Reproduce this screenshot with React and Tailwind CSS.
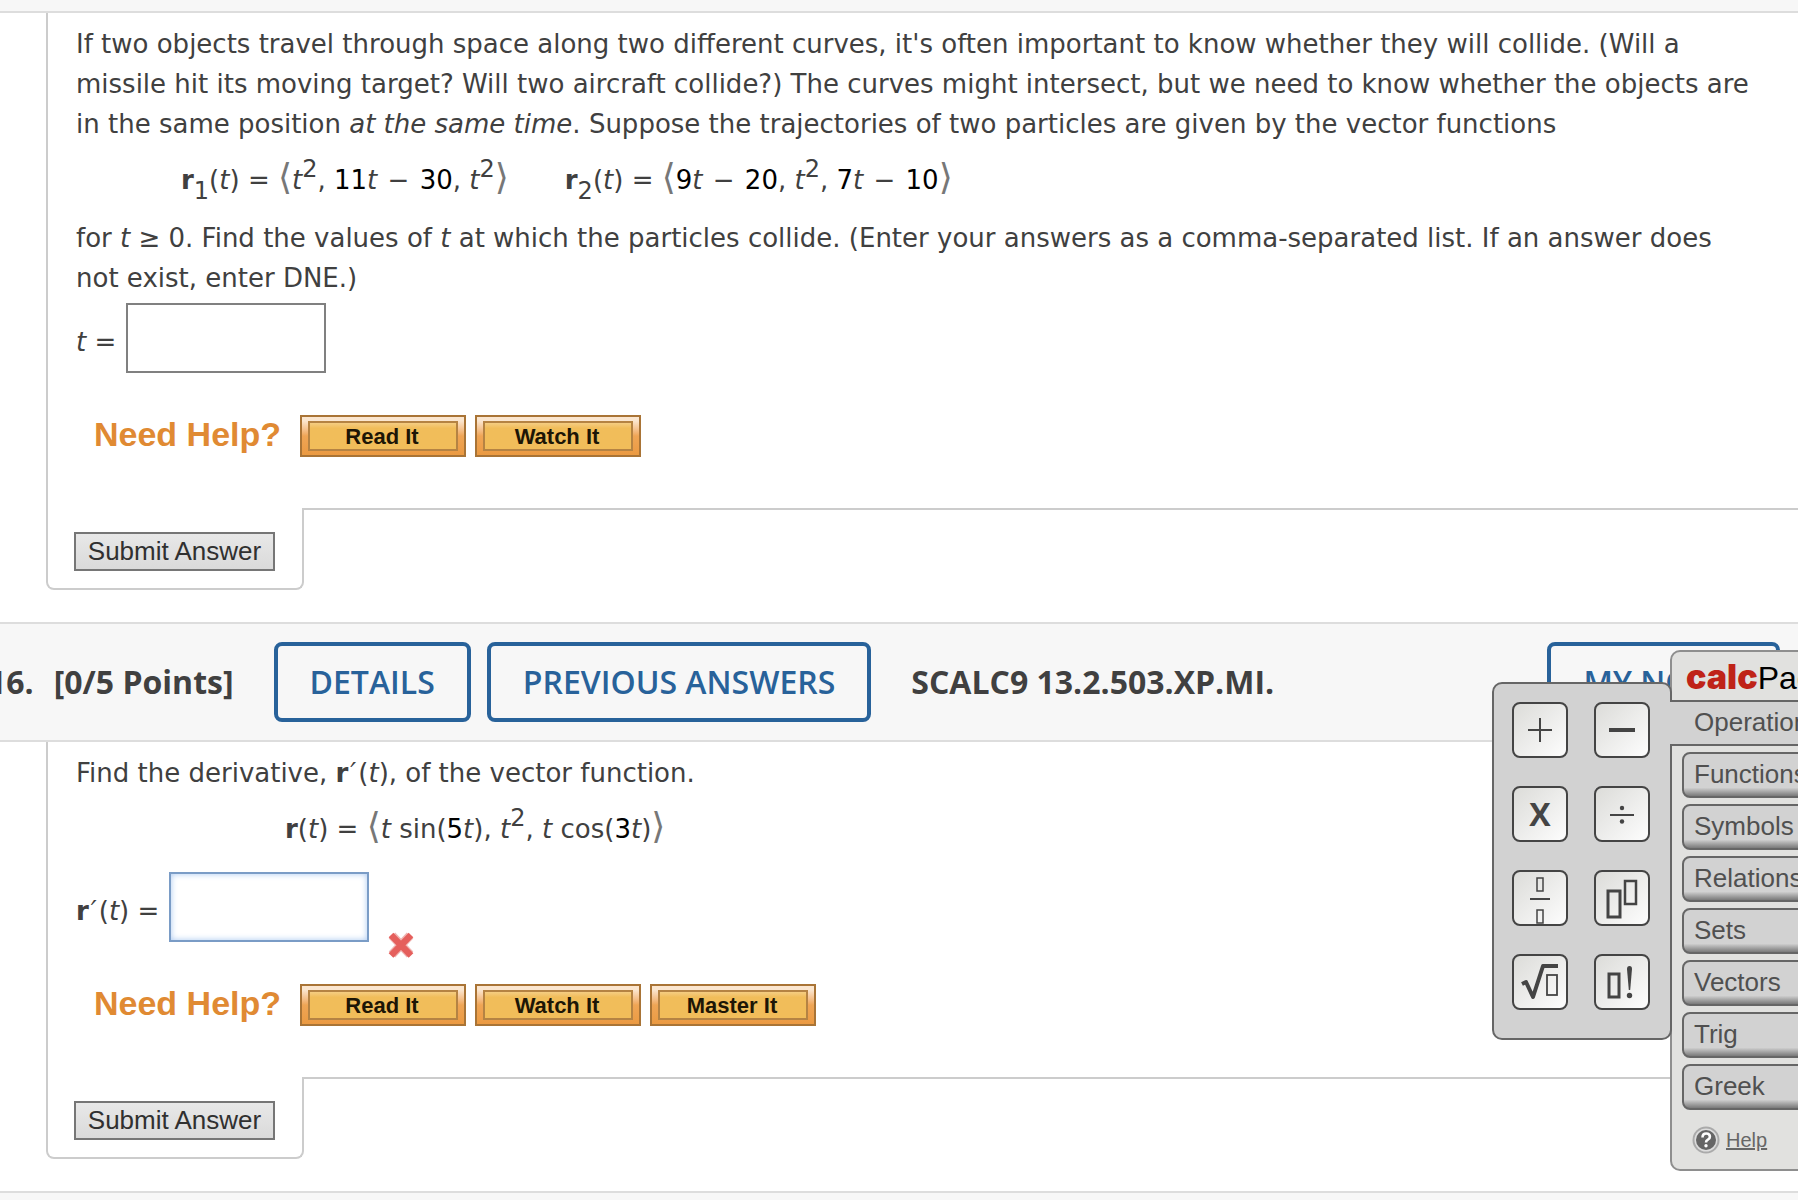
import { useState } from 'react';

const menuItems = ['Functions', 'Symbols', 'Relations', 'Sets', 'Vectors', 'Trig', 'Greek'];

// Drawings on the keypad buttons, all on a 52x52 grid
const keys = [
  {
    name: 'Plus',
    icon: <path d="M14 26h24M26 14v24" stroke="#444" strokeWidth="2" />,
  },
  {
    name: 'Minus',
    icon: <path d="M13 26h26" stroke="#444" strokeWidth="4" />,
  },
  {
    name: 'Times',
    icon: (
      <text
        x="26"
        y="38"
        textAnchor="middle"
        className="fill-[#444] font-['Open_Sans',sans-serif] text-[32px] font-bold"
      >
        X
      </text>
    ),
  },
  {
    name: 'Divide',
    icon: (
      <>
        <path d="M14 27h24" stroke="#444" strokeWidth="2" />
        <circle cx="26" cy="20" r="2.2" fill="#444" />
        <circle cx="26" cy="33.5" r="2.2" fill="#444" />
      </>
    ),
  },
  {
    name: 'Fraction',
    icon: (
      <g stroke="#444" fill="none">
        <rect x="23" y="6" width="6" height="13" strokeWidth="1.5" />
        <path d="M16 27h20" strokeWidth="2" />
        <rect x="23" y="38" width="6" height="13" strokeWidth="1.5" />
      </g>
    ),
  },
  {
    name: 'Exponent',
    icon: (
      <g stroke="#444" fill="none">
        <rect x="12" y="19" width="12" height="26" strokeWidth="3" />
        <rect x="29" y="9" width="11" height="23" strokeWidth="2.5" />
      </g>
    ),
  },
  {
    name: 'Square root',
    icon: (
      <g stroke="#444" fill="none">
        <path d="M8 28l4-2 7 15 10-31h15" strokeWidth="4" strokeLinejoin="round" />
        <rect x="33" y="19" width="10" height="20" strokeWidth="1.8" />
      </g>
    ),
  },
  {
    name: 'Factorial',
    icon: (
      <>
        <rect x="13" y="18" width="10" height="23" stroke="#444" strokeWidth="3" fill="none" />
        <path d="M31 13q0-3 2.500-3t2.500 3l-1.800 21h-1.400z" fill="#444" />
        <circle cx="33.500" cy="39.500" r="2.700" fill="#444" />
      </>
    ),
  },
];

const Num = ({ children }) => <span className="text-black">{children}</span>;

const Sup = ({ children }) => <sup className="-top-3 text-[24px]">{children}</sup>;

const Sub = ({ children }) => <sub className="-bottom-2.5 text-[24px]">{children}</sub>;

const Minus = () => <span className="px-0.5"> − </span>;

const Prime = () => <i className="px-0.5">′</i>;

// Tall angle brackets around a vector
const Vector = ({ children }) => (
  <>
    <span className="text-[36px] leading-none text-[#777]">⟨</span>
    {children}
    <span className="text-[36px] leading-none text-[#777]">⟩</span>
  </>
);

const HelpRow = ({ buttons }) => (
  <div className="mt-[42px] flex items-center gap-[9px] pl-[18px] font-['Liberation_Sans',sans-serif]">
    <span className="mr-[9px] w-[188px] pb-1 text-[34px] leading-9 font-bold text-[#e08a33]">
      Need Help?
    </span>
    {buttons.map((label) => (
      <button
        key={label}
        type="button"
        className="h-[42px] w-[166px] border-2 border-[#a97436] bg-linear-to-b from-[#fbe6cf] from-10% via-[#efa555] via-50% to-[#eb9a42] px-1.5 py-1"
      >
        <span className="flex h-full items-center justify-center border-2 border-[#b58343] bg-linear-to-b from-[#f5cd82] to-[#f1bd5a] to-20% pt-0.5 pr-0.5 text-[22px] leading-6 font-bold text-[#1d1606]">
          {label}
        </span>
      </button>
    ))}
  </div>
);

const Question = ({ children, help }) => (
  <section className="ml-[46px]">
    <div className="border-l-2 border-[#ccc] pt-[11px] pr-10 pb-[51px] pl-7">
      {children}
      <HelpRow buttons={help} />
    </div>

    {/* Submit tab hanging under the panel */}
    <div className="flex items-start">
      <div className="rounded-b-lg border-x-2 border-b-2 border-[#ccc] pt-6 pr-[27px] pb-[17px] pl-[26px]">
        <button
          type="submit"
          className="block h-[39px] w-[201px] border-2 border-[#767676] bg-linear-to-b from-[#e8e8e8] to-[#dadada] pb-0.5 font-['Liberation_Sans',sans-serif] text-[26px] leading-8 whitespace-nowrap text-[#303030]"
        >
          Submit Answer
        </button>
      </div>
      <div className="-ml-0.5 flex-1 border-t-2 border-[#ccc]" />
    </div>
  </section>
);

const headerButton =
  'h-20 shrink-0 rounded-lg border-4 border-[#28629a] text-[32px] font-semibold text-[#28629a]';

const CalcPad = () => (
  <aside className="absolute top-[650px] -right-[72px] flex items-start font-['Liberation_Sans',sans-serif] text-[26px] text-[#505050]">
    <div className="z-10 mt-8 grid grid-cols-2 gap-x-[26px] gap-y-7 rounded-[10px] border-2 border-[#666] bg-[#d2d2d2] pt-[18px] pr-5 pb-7 pl-[18px]">
      {keys.map(({ name, icon }) => (
        <button
          key={name}
          type="button"
          aria-label={name}
          className="size-14 rounded-lg border-2 border-[#444] bg-linear-to-br from-[#dcdcd9] to-[#fdfdfd]"
        >
          <svg viewBox="0 0 52 52" className="size-full">
            {icon}
          </svg>
        </button>
      ))}
    </div>

    <div className="-ml-0.5 w-[200px] rounded-[10px] border-2 border-[#8e8e8e] bg-[#e1e1df]">
      <h2 className="h-12 pl-3.5 text-[32px] leading-[50px] whitespace-nowrap text-black">
        <span className="font-['Inter',sans-serif] text-[34px] font-black text-[#bf2318]">
          calc
        </span>
        Pad
      </h2>
      <button
        type="button"
        className="relative z-20 -ml-0.5 block h-[46px] w-[200px] border-y-2 border-[#666] bg-[#d2d2d2] pb-0.5 pl-6 text-left"
      >
        Operations
      </button>
      <div className="flex flex-col gap-1.5 pt-1.5 pl-2.5">
        {menuItems.map((item) => (
          <button
            key={item}
            type="button"
            className="h-[46px] rounded-lg border-2 border-[#666] bg-linear-to-b from-[#d2d2d2] from-80% to-[#7a7a7a] pb-0.5 pl-2.5 text-left"
          >
            {item}
          </button>
        ))}
      </div>
      <a
        href="#help"
        className="mt-4 mb-[15px] flex items-center gap-1.5 pl-5 text-[20px] leading-7 text-[#666]"
      >
        <svg viewBox="0 0 28 28" className="size-7">
          <circle cx="14" cy="14" r="13.500" fill="#aaa" />
          <circle cx="14" cy="14" r="11.500" fill="#ddd" />
          <circle cx="14" cy="14" r="10" fill="#666" />
          <path
            d="M10.500 11.500q0-4 3.700-4t3.700 3.200q0 2-2 3t-1.900 2.800"
            fill="none"
            stroke="#fff"
            strokeWidth="2.600"
          />
          <circle cx="14" cy="19.800" r="1.700" fill="#fff" />
        </svg>
        <span className="underline">Help</span>
      </a>
    </div>
  </aside>
);

const App = () => {
  const [collide, setCollide] = useState('');
  const [derivative, setDerivative] = useState('');

  return (
    <main className="relative min-h-screen overflow-hidden bg-white font-['Verdana','DejaVu_Sans',sans-serif] text-[26px] leading-10 text-[#404040]">
      <div className="h-[13px] border-b-2 border-[#ddd] bg-[#f7f7f7]" />

      <Question help={['Read It', 'Watch It']}>
        <p>
          If two objects travel through space along two different curves, it's often important to
          know whether they will collide. (Will a missile hit its moving target? Will two aircraft
          collide?) The curves might intersect, but we need to know whether the objects are in the
          same position <em>at the same time</em>. Suppose the trajectories of two particles are
          given by the vector functions
        </p>
        <div className="flex h-[74px] items-center gap-14 pb-1 pl-[105px] whitespace-nowrap">
          <span>
            <b>r</b>
            <Sub>1</Sub>(<i>t</i>) ={' '}
            <Vector>
              <i>t</i>
              <Sup>2</Sup>, <Num>11</Num>
              <i>t</i>
              <Minus />
              <Num>30</Num>, <i>t</i>
              <Sup>2</Sup>
            </Vector>
          </span>
          <span>
            <b>r</b>
            <Sub>2</Sub>(<i>t</i>) ={' '}
            <Vector>
              <Num>9</Num>
              <i>t</i>
              <Minus />
              <Num>20</Num>, <i>t</i>
              <Sup>2</Sup>, <Num>7</Num>
              <i>t</i>
              <Minus />
              <Num>10</Num>
            </Vector>
          </span>
        </div>
        <p>
          for <i>t</i> ≥ 0. Find the values of <i>t</i> at which the particles collide. (Enter your
          answers as a comma-separated list. If an answer does not exist, enter DNE.)
        </p>
        <div className="mt-[5px] flex items-center gap-2.5">
          <label htmlFor="collide" className="pt-2">
            <i>t</i> =
          </label>
          <input
            id="collide"
            type="text"
            value={collide}
            onChange={(e) => setCollide(e.target.value)}
            className="h-[70px] w-[200px] border-2 border-[#808080] px-2"
          />
        </div>
      </Question>

      {/* Question header */}
      <header className="mt-8 flex items-center border-y-2 border-[#ddd] bg-[#f7f7f7] py-[18px] font-['Open_Sans',sans-serif] text-[32px] font-bold whitespace-nowrap">
        <span className="-ml-3">16.</span>
        <span className="ml-5">[0/5 Points]</span>
        <button type="button" className={`${headerButton} ml-10 px-8`}>
          DETAILS
        </button>
        <button type="button" className={`${headerButton} ml-4 px-8`}>
          PREVIOUS ANSWERS
        </button>
        <span className="ml-10">SCALC9 13.2.503.XP.MI.</span>
        <button type="button" className={`${headerButton} mr-[18px] ml-auto px-8`}>
          MY NOTES
        </button>
      </header>

      <Question help={['Read It', 'Watch It', 'Master It']}>
        <p>
          Find the derivative, <b>r</b>
          <Prime />(<i>t</i>), of the vector function.
        </p>
        <div className="flex h-[74px] items-center pb-1 pl-[209px] whitespace-nowrap">
          <span>
            <b>r</b>(<i>t</i>) ={' '}
            <Vector>
              <i>t</i> sin(<Num>5</Num>
              <i>t</i>), <i>t</i>
              <Sup>2</Sup>, <i>t</i> cos(<Num>3</Num>
              <i>t</i>)
            </Vector>
          </span>
        </div>
        <div className="mt-[5px] flex items-center gap-2.5">
          <label htmlFor="derivative" className="pt-2">
            <b>r</b>
            <Prime />(<i>t</i>) =
          </label>
          <input
            id="derivative"
            type="text"
            value={derivative}
            onChange={(e) => setDerivative(e.target.value)}
            className="h-[70px] w-[200px] border-2 border-[#7a9cc6] px-2 inset-shadow-[0_0_6px_#a9c8f0]"
          />
          {/* Wrong answer mark */}
          <svg viewBox="0 0 28 28" className="-mb-[76px] ml-2 size-7" role="img" aria-label="Incorrect">
            <path
              d="M5 4.500l18 19M23 4.500L5 23.500"
              stroke="#f0b5b3"
              strokeWidth="9"
              strokeLinejoin="round"
            />
            <path d="M4 4l20 20.500M24 4L4 24.500" stroke="#e55f5c" strokeWidth="6.500" />
          </svg>
        </div>
      </Question>

      <div className="mt-8 h-10 border-t-2 border-[#ddd] bg-[#f7f7f7]" />

      <CalcPad />
    </main>
  );
};

export default App;
